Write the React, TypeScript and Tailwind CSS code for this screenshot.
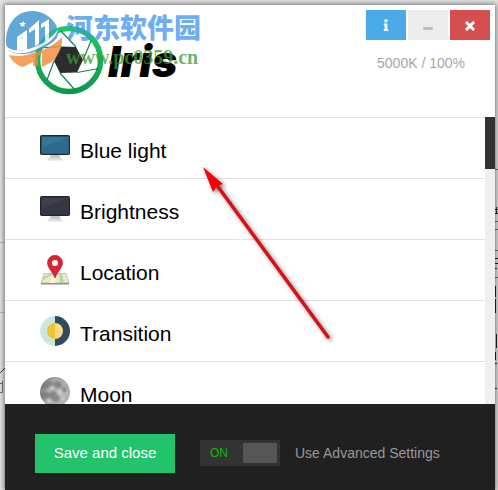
import { useState } from "react";
import { FaInfo } from "react-icons/fa";

const Monitor = ({ screen, shade }: { screen: string; shade: string }) => (
  <svg viewBox="0 0 30 30" className="size-[30px]" aria-hidden="true">
    <path fill="#c3c5c9" d="M10.500 22h9l1 3.500h-11z" />
    <path fill="#dcdde0" d="M8.500 25h13l1 2.500h-15z" />
    <rect y="2" width="30" height="20" rx="1.800" fill="#22272d" />
    <rect x="1.500" y="3.500" width="27" height="17" fill={screen} />
    <path fill={shade} d="M1.500 20.500V15L28.500 4v16.500z" />
  </svg>
);

const MapPin = () => (
  <svg viewBox="0 0 30 30" className="size-[30px]" aria-hidden="true">
    <path fill="#8f8a7c" d="M1 28h28v1.500H1z" />
    <path fill="#e6ead0" stroke="#aaa896" strokeWidth="0.600" d="M4 18.500h22L29 28H1z" />
    <path fill="#b8d59a" d="M19 18.500h3l2 9.500h-4zM3 22l7-3h3l-10 6z" />
    <path fill="#fff5d2" d="M9 28l5-9h2l-1 9z" />
    <path
      fill="#da2430"
      stroke="#b11620"
      strokeWidth="0.600"
      d="M15 23C13 17.500 7.500 13 7.500 7.800a7.500 7.500 0 0 1 15 0C22.500 13 17 17.500 15 23z"
    />
    <circle cx="15" cy="8" r="3" fill="#fff" />
  </svg>
);

const rays = [100, 122, 145, 168, 192, 215, 238, 260];

const DayNight = () => (
  <svg viewBox="0 0 30 30" className="size-[30px]" aria-hidden="true">
    <path fill="#c8e9e8" d="M15 0a15 15 0 0 0 0 30z" />
    <path fill="#34495e" d="M15 0a15 15 0 0 1 0 30z" />
    {rays.map((deg) => (
      <path
        key={deg}
        d="M24.500 15h3"
        stroke="#e5dc8f"
        strokeWidth="1.200"
        transform={`rotate(${deg} 15 15)`}
      />
    ))}
    <path fill="#f3c22b" d="M15 7a8 8 0 0 0 0 16z" />
    <path fill="#f8dc8b" d="M15 7a8 8 0 0 1 0 16z" />
  </svg>
);

const MoonPhoto = () => (
  <svg viewBox="0 0 30 30" className="size-[30px]" aria-hidden="true">
    <defs>
      <radialGradient id="moon" cx="0.600" cy="0.550" r="0.600">
        <stop offset="0" stopColor="#c4c4c4" />
        <stop offset="0.800" stopColor="#aaa" />
        <stop offset="1" stopColor="#8a8a8a" />
      </radialGradient>
      <filter id="soften">
        <feGaussianBlur stdDeviation="0.800" />
      </filter>
      <clipPath id="disc">
        <circle cx="15" cy="15" r="15" />
      </clipPath>
    </defs>
    <circle cx="15" cy="15" r="15" fill="url(#moon)" />
    <g clipPath="url(#disc)">
      <g filter="url(#soften)" fill="#6a6a6a" opacity="0.650">
        <path d="M2 9c2-4 6-6 9-5s3 4 0 5-4 4-7 4-3-2-2-4z" />
        <path d="M15 5c3-2 7 0 7 3s-3 4-6 3-3-5-1-6z" />
        <path d="M1 15c2-2 6-1 8 1s0 5-3 6-6-1-6-3z" />
        <path d="M12 14c3-1 5 1 5 3s3 1 3 4-4 5-6 3-5-2-5-5 1-4 3-5z" />
        <path d="M23 10c3 0 4 2 3 4s-4 1-4-1z" />
      </g>
    </g>
    <g filter="url(#soften)" fill="#e6e6e6">
      <circle cx="12" cy="11" r="1.300" />
      <circle cx="20" cy="15" r="1.200" />
      <circle cx="9" cy="24" r="1.500" />
      <circle cx="23" cy="22" r="1.200" />
    </g>
  </svg>
);

const items = [
  { label: "Blue light", icon: <Monitor screen="#357595" shade="#2d6b8b" /> },
  { label: "Brightness", icon: <Monitor screen="#3d404d" shade="#343744" /> },
  { label: "Location", icon: <MapPin /> },
  { label: "Transition", icon: <DayNight /> },
  { label: "Moon", icon: <MoonPhoto /> },
];

const IrisLogo = () => (
  <svg viewBox="0 0 70 70" className="size-[70px]" aria-hidden="true">
    <defs>
      <linearGradient id="ring" x1="0" y1="0" x2="0" y2="1">
        <stop offset="0" stopColor="#22c56c" />
        <stop offset="1" stopColor="#0b9a4c" />
      </linearGradient>
    </defs>
    <circle cx="35" cy="35" r="31.500" fill="none" stroke="url(#ring)" strokeWidth="5.500" />
    <path
      fill="none"
      stroke="#13864a"
      strokeWidth="1.200"
      d="M27 6L42 22M57 16L49 35M65 43.500L43 47.500M41 65L26 48M13 55L20 36M6 23L27 21.500"
    />
    <path fill="#2c2c2e" d="M27 21.500L42 22L49 35L43 47.500L26 48L20 36z" />
  </svg>
);

const Watermark = () => (
  <div className="pointer-events-none absolute top-1 left-0 flex gap-1">
    <svg viewBox="0 0 57 58" className="mt-[2px] h-[58px] w-[57px]" aria-hidden="true">
      <g opacity="0.800">
        <path fill="#3a93cd" d="M1 33C0 14 11 0 27 0c12 0 21 7 25 16L34 36 12 42C6 41 2 38 1 33z" />
        <path fill="#3a93cd" d="M2 38c9 5 27 1 37-7l14-13c1 6-1 10-5 13-15 11-34 17-46 7z" />
        <path fill="#f28a35" d="M4 44c8 2 16 1 24-2v9l-10 5C11 54 7 50 4 44z" />
        <path fill="#f28a35" d="M28 42c11-2 21-8 29-16 1 8-3 20-12 26l-8 4V42l-4 3v10h-5z" />
        <path fill="#fff" d="M12 26l10-7v18l-4 1V26l-3 2v11l-3 1z" />
        <path fill="#fff" d="M24 18l10-9v24l-4 2V18l-6 4zM36 13l8-5v20l-4 3V15l-4 2z" />
        <path fill="#fff" d="M18 27h4v12h-7V28z" />
        <path
          fill="#fff"
          d="M0 33c4 9 22 8 36 0 8-5 14-10 17-15 0 5-6 12-15 17-15 9-34 11-38-2z"
        />
        <path fill="#fff" d="M18 10l1 2h2l-2 2 1 2-2-1-2 1v-2l-2-2h3z" />
      </g>
    </svg>
    <div className="flex flex-col gap-[2px] pt-[2px]">
      <span className="font-['Noto_Sans_CJK_SC',sans-serif] text-[27px] leading-[32px] font-black whitespace-nowrap text-[#3d94f0]/75">
        河东软件园
      </span>
      <span className="font-['Liberation_Serif',serif] text-[20px] leading-[24px] font-bold text-[#3b9a35]/75">
        www.pc0359.cn
      </span>
    </div>
  </div>
);

const Arrow = () => (
  <svg
    viewBox="0 0 140 184"
    className="pointer-events-none absolute top-[162px] left-[196px] w-[140px] drop-shadow-[2px_2px_2px_rgba(0,0,0,0.5)]"
    aria-hidden="true"
  >
    <path d="M20 22L132 175" stroke="#d81118" strokeWidth="3.500" strokeLinecap="round" />
    <path fill="#fb0007" d="M7 5L27 22L21 24L17 30z" />
  </svg>
);

// slivers of the page that shows behind the window
const Backdrop = () => (
  <>
    <svg viewBox="0 0 5 490" className="absolute top-0 left-0 w-[5px]" aria-hidden="true">
      <path stroke="#b5b5b5" d="M0 242.500h5M0 312.500h5" />
      <path stroke="#3d3d3d" fill="none" d="M0 373l5-5" />
      <path stroke="#777" fill="none" d="M0 383.500h3M0 392.500h2M2.500 381v12" />
    </svg>
    <svg viewBox="0 0 3 490" className="absolute top-0 right-0 w-[3px]" aria-hidden="true">
      <path
        stroke="#222"
        fill="none"
        d="M0 209.500h3M0 213.500h3M1.500 207v7M0 258.500h3M0 263.500h3M0 268.500h2M.500 286v11M.500 299v14M1.500 334v14M.500 352v8M0 363.500h2M0 388.500h2"
      />
      <path stroke="#777" d="M0 169.500h3M0 221.500h3M0 229.500h3M0 250.500h3M0 277.500h3" />
    </svg>
  </>
);

const App: React.FC = () => {
  const [advanced, setAdvanced] = useState(true);

  return (
    <div className="relative h-screen overflow-hidden bg-[#e2e2e2] pt-[5px] pr-[3px] pl-[5px] font-['Liberation_Sans',Arial,sans-serif]">
      <Backdrop />
      <main className="relative flex h-full flex-col bg-white shadow-[0_0_5px_1px_rgba(0,0,0,0.5)]">
        {/* Header */}
        <header className="relative flex h-28 shrink-0 justify-between">
          <div className="flex items-start gap-1 pt-5 pl-[29px]">
            <IrisLogo />
            <h1 className="pt-3 font-['Inter',sans-serif] text-[43px] leading-[48px] font-black text-black italic">
              Iris
            </h1>
          </div>
          <Watermark />
          <div className="flex flex-col items-end gap-3 p-[5px]">
            <div className="flex gap-[2px]">
              <button
                aria-label="Info"
                className="flex h-[30px] w-10 items-center justify-center bg-[#4aaae8] text-white"
              >
                <FaInfo size={12} />
              </button>
              <button
                aria-label="Minimize"
                className="flex h-[30px] w-10 items-center justify-center bg-[#ececec] text-[#bdbdbd]"
              >
                <svg viewBox="0 0 10 3" className="mt-[7px] w-[10px]" aria-hidden="true">
                  <rect width="10" height="3" rx="1" fill="currentColor" />
                </svg>
              </button>
              <button
                aria-label="Close"
                className="flex h-[30px] w-10 items-center justify-center bg-[#d54e50] text-white"
              >
                <svg viewBox="0 0 10 10" className="mt-[2px] w-[10px]" aria-hidden="true">
                  <path
                    d="M2 2l6 6M8 2l-6 6"
                    stroke="currentColor"
                    strokeWidth="3"
                    strokeLinecap="square"
                  />
                </svg>
              </button>
            </div>
            <p className="pr-[25px] text-sm leading-[22px] text-[#a6a6a6]">5000K / 100%</p>
          </div>
        </header>

        {/* Settings list */}
        <div className="flex min-h-0 flex-1">
          <ul className="flex-1 overflow-hidden">
            {items.map((item) => (
              <li key={item.label} className="border-t border-[#e2e2e2]">
                <a href="#" className="flex h-[60px] items-center gap-[10px] pl-[35px]">
                  {item.icon}
                  <span className="pt-[6px] text-[21px] leading-6 text-black">{item.label}</span>
                </a>
              </li>
            ))}
          </ul>
          <div className="w-[10px] bg-[#efefef]">
            <div className="h-[52px] bg-[#333]" />
          </div>
        </div>

        {/* Footer */}
        <footer className="flex h-[86px] shrink-0 items-center bg-[#202020] pt-3 pl-[30px]">
          <button className="h-[39px] w-[140px] bg-[#22c36b] text-[15px] text-white">
            Save and close
          </button>
          <label className="flex cursor-pointer items-center gap-[15px] pl-[25px] text-sm text-[#999]">
            <input
              type="checkbox"
              className="peer sr-only"
              checked={advanced}
              onChange={(e) => setAdvanced(e.target.checked)}
            />
            <span className="flex h-[26px] w-20 items-center justify-between bg-[#333] p-[3px] pl-[10px] text-xs text-[#12b812]">
              {advanced ? "ON" : "OFF"}
              <span className="h-5 w-[34px] bg-[#565656]" />
            </span>
            Use Advanced Settings
          </label>
        </footer>
      </main>
      <Arrow />
    </div>
  );
};

export default App;
